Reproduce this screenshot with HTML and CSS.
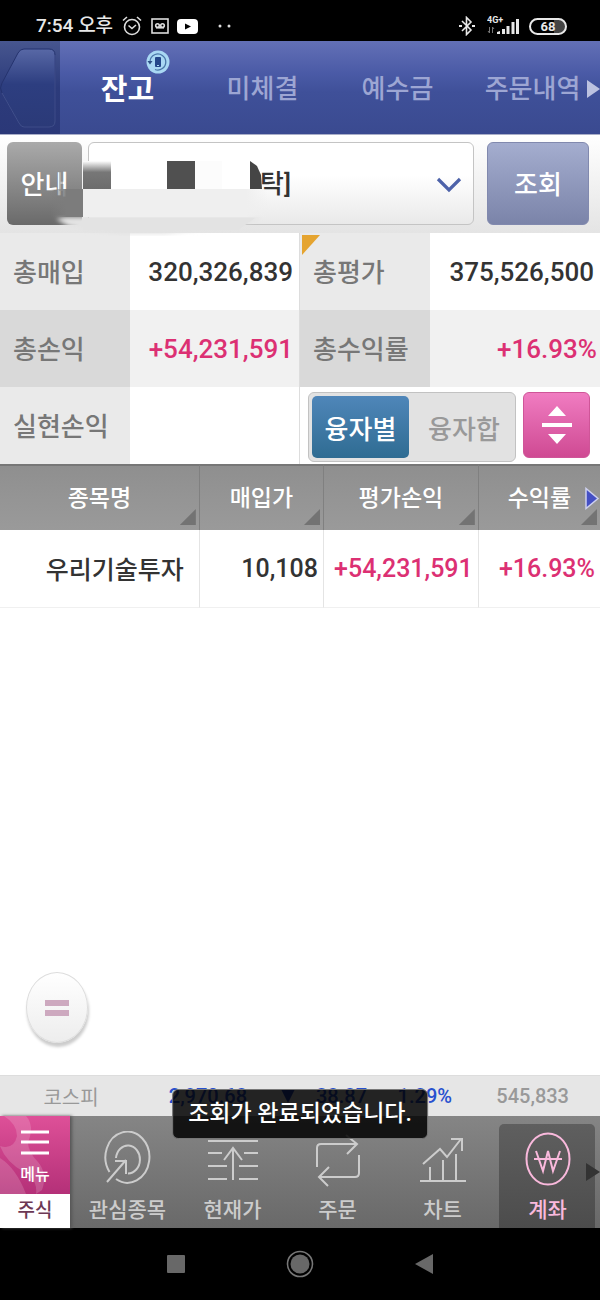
FILE: index.html
```
<!DOCTYPE html>
<html lang="ko">
<head>
    <meta charset="UTF-8">
    <meta name="viewport" content="width=device-width, initial-scale=1.0">
    <title>잔고</title>
    <link rel="stylesheet" href="styles.css">
</head>
<body>
    <div class="status-bar">
        <span class="clock">7:54 오후</span>
        <svg width="22" height="22" viewBox="0 0 22 22" fill="none" stroke="#ddd" stroke-width="1.6">
            <circle cx="11" cy="12" r="7.5"/>
            <path d="M7.5 10.5l3.5 3 4-3.5M2 5.5L6 2M20 5.5L16 2"/>
        </svg>
        <svg class="gap" width="18" height="16" viewBox="0 0 18 16" fill="none" stroke="#ddd" stroke-width="1.6">
            <rect x="1" y="1" width="16" height="14"/>
            <circle cx="6.5" cy="7.5" r="1.8"/>
            <circle cx="11.5" cy="7.5" r="1.8"/>
            <path d="M5 9.8h8"/>
        </svg>
        <svg class="gap" width="21" height="15" viewBox="0 0 21 15">
            <rect width="21" height="15" rx="4" fill="#fff"/>
            <path d="M8 4.5v6l6-3z" fill="#000"/>
        </svg>
        <svg class="dots" width="14" height="4" viewBox="0 0 14 4" fill="#ddd">
            <circle cx="2" cy="2" r="1.5"/>
            <circle cx="11" cy="2" r="1.5"/>
        </svg>
        <svg class="right" width="18" height="20" viewBox="0 0 18 20" fill="none" stroke="#e8e8e8" stroke-width="1.6">
            <path d="M4 5l9 9-4.500 4.500V1.500L13 6l-9 9"/>
            <path d="M1 10h3M14 10h3" stroke-width="2.200"/>
        </svg>
        <svg class="signal" width="34" height="20" viewBox="0 0 34 20">
            <text x="0" y="7" class="network">4G+</text>
            <path d="M2.500 11v6M1 15l1.500 2M5.500 17v-6l1.500 2" stroke="#777" fill="none"/>
            <path d="M10 18v-2l3-1v3zM15 18v-5h3v5zM19.500 18V10h3v8zM24.500 18V6h3v12zM29 18V3h3v15z" fill="#e8e8e8"/>
        </svg>
        <span class="battery">68</span>
    </div>

    <header class="top">
        <button class="back" aria-label="이전">
            <svg width="60" height="93" viewBox="0 0 60 93">
                <defs>
                    <linearGradient id="backFill" x1="0" y1="0" x2="0" y2="1">
                        <stop offset="0" stop-color="#5868a6"/>
                        <stop offset="0.45" stop-color="#2d3e80"/>
                        <stop offset="1" stop-color="#2b3a78"/>
                    </linearGradient>
                </defs>
                <path d="M24 8h25q6 0 6 6v66q0 6-6 6H24q-3 0-5-4L2 52q-3-5 0-10L18 12q2-4 6-4z" fill="url(#backFill)" stroke="#25336e"/>
                <path d="M2 52l17 30q2 4 5 4h25q6 0 6-6V14" fill="none" stroke="#5463a0" opacity=".6"/>
            </svg>
        </button>
        <nav class="tabs">
            <a href="#" class="tab active">잔고
                <svg class="refresh" width="24" height="24" viewBox="0 0 24 24">
                    <circle cx="12" cy="12" r="11.500" fill="#a9d8f3"/>
                    <path d="M9 4.500a8 8 0 1 1 0 15M4 12a8 8 0 0 1 5-7.500" fill="none" stroke="#4a77a8" stroke-width="1.300"/>
                    <path d="M1.500 11h5L4 14.500z" fill="#2c4f85"/>
                    <rect x="9" y="7" width="6" height="10" rx="1" fill="#24478a"/>
                    <path d="M11 15.500h2" stroke="#a9d8f3"/>
                </svg>
            </a>
            <a href="#" class="tab">미체결</a>
            <a href="#" class="tab">예수금</a>
            <a href="#" class="tab">주문내역</a>
        </nav>
        <svg class="tabs-more" width="14" height="18" viewBox="0 0 14 18"><path d="M1 0v18l13-9z" fill="#bcc2e0"/></svg>
    </header>

    <form class="search">
        <button type="button" class="info">안내</button>
        <div class="account">
            <select aria-label="계좌">
                <option>탁]</option>
            </select>
            <svg class="chevron" width="26" height="16" viewBox="0 0 26 16"><path d="M2 2l11 11L24 2" fill="none" stroke="#4d62a9" stroke-width="3.200"/></svg>
        </div>
        <button type="button" class="query">조회</button>
        <!-- hides the account owner -->
        <svg class="mask" width="300" height="104" viewBox="0 0 300 104">
            <defs>
                <linearGradient id="fadeDown" x1="0" y1="0" x2="0" y2="1">
                    <stop offset="0" stop-color="#fff"/>
                    <stop offset="0.4" stop-color="#777"/>
                    <stop offset="1" stop-color="#6c6c6c"/>
                </linearGradient>
                <linearGradient id="fadeRight" x1="0" y1="0" x2="1" y2="0">
                    <stop offset="0.88" stop-color="#efefef"/>
                    <stop offset="1" stop-color="#efefef" stop-opacity="0"/>
                </linearGradient>
                <linearGradient id="fadeLeft" x1="0" y1="0" x2="1" y2="0">
                    <stop offset="0" stop-color="#7c7c7c" stop-opacity="0"/>
                    <stop offset="0.5" stop-color="#7c7c7c"/>
                </linearGradient>
                <filter id="soft"><feGaussianBlur stdDeviation="2"/></filter>
            </defs>
            <path d="M56 85L66 83H262L240 91 165 100H120L84 96 68 92z" fill="#e3e3e3" filter="url(#soft)"/>
            <path d="M83 84H255L238 96H83z" fill="#e3e3e3"/>
            <rect x="83" y="30" width="177" height="26" fill="#fff"/>
            <rect x="50" y="55" width="33" height="28" fill="url(#fadeLeft)"/>
            <rect x="59" y="37" width="4" height="20" fill="#909090" opacity=".6"/>
            <rect x="83" y="55" width="185" height="28" fill="url(#fadeRight)"/>
            <rect x="83" y="27" width="28" height="28" fill="url(#fadeDown)"/>
            <rect x="167" y="27" width="28" height="28" fill="#505050"/>
            <rect x="195" y="27" width="27" height="28" fill="#fcfcfc"/>
            <path d="M250 27l7 5 4 9 1 14h-12z" fill="#454545"/>
        </svg>
    </form>

    <table class="summary">
        <tr>
            <th scope="row">총매입</th>
            <td>320,326,839</td>
            <th scope="row" class="marked">총평가</th>
            <td>375,526,500</td>
        </tr>
        <tr class="shade">
            <th scope="row">총손익</th>
            <td class="up">+54,231,591</td>
            <th scope="row">총수익률</th>
            <td class="up">+16.93%</td>
        </tr>
        <tr>
            <th scope="row">실현손익</th>
            <td></td>
            <td colspan="2" class="tools">
                <div class="tool-row">
                    <div class="switch">
                        <button class="on" aria-pressed="true">융자별</button>
                        <button aria-pressed="false">융자합</button>
                    </div>
                    <button class="fold" aria-label="접기">
                        <svg width="30" height="40" viewBox="0 0 30 40" fill="#fff"><path d="M15 1l9 10H6zM0 18h30v4H0zM6 29h18l-9 10z"/></svg>
                    </button>
                </div>
            </td>
        </tr>
    </table>

    <main>
        <table class="stocks">
            <thead>
                <tr>
                    <th class="name"><button>종목명</button></th>
                    <th class="price"><button>매입가</button></th>
                    <th class="profit"><button>평가손익</button></th>
                    <th class="rate"><button>수익률</button>
                        <svg class="cols-more" width="16" height="24" viewBox="0 0 16 24"><path d="M2 1.500v20L14 11.500z" fill="#444fc4" stroke="#cdd0ee" stroke-width="1.500"/></svg>
                    </th>
                </tr>
            </thead>
            <tbody>
                <tr>
                    <td class="name">우리기술투자</td>
                    <td>10,108</td>
                    <td class="up">+54,231,591</td>
                    <td class="up">+16.93%</td>
                </tr>
            </tbody>
        </table>
        <button class="float" aria-label="빠른메뉴">
            <svg width="24" height="16" viewBox="0 0 24 16" fill="#cda9bf"><path d="M0 0h24v6H0zM0 10h24v6H0z"/></svg>
        </button>
    </main>

    <footer>
        <div class="ticker">
            <span class="index">코스피</span>
            <span>2,970.68</span>
            <span><svg width="14" height="14" viewBox="0 0 14 14"><path d="M0 0h14L7 14z" fill="#2344bd"/></svg></span>
            <span>38.87</span>
            <span>1.29%</span>
            <span class="volume">545,833</span>
        </div>
        <div class="toast" role="status">조회가 완료되었습니다.</div>
        <nav class="menu">
            <div class="menu-main">
                <button class="menu-open">
                    <svg class="swirl" width="70" height="78" viewBox="0 0 70 78">
                        <path d="M4 0h22q9 10 2 26 0 10 10 20 10 12 4 28l-6 4q2-14-12-22Q6 46 0 30q14 4 17-10Q17 8 4 0zM0 42q16 10 26 36H0z" fill="#fff" opacity=".16"/>
                    </svg>
                    <svg width="28" height="26" viewBox="0 0 28 26"><path d="M0 2h28M0 12h28M0 23h28" stroke="#fff" stroke-width="3"/></svg>
                    <span>메뉴</span>
                </button>
                <button class="menu-stock">주식</button>
            </div>
            <a href="#" class="item">
                <svg width="48" height="56" viewBox="0 0 48 56">
                    <path d="M5.500 41A22 25.500 0 1 1 12 48M12 27a12 14 0 1 1 12 15.500M3 51l19-22M11 30h11v13"/>
                </svg>
                <span>관심종목</span>
            </a>
            <a href="#" class="item">
                <svg width="50" height="56" viewBox="0 0 50 56">
                    <path d="M0 10h50M0 22h14M36 22h14M0 35h19M31 35h19M0 48h19M31 48h19M25 49V17M16 29l9-12 9 12"/>
                </svg>
                <span>현재가</span>
            </a>
            <a href="#" class="item">
                <svg width="46" height="56" viewBox="0 0 46 56">
                    <path d="M2 36V17q0-4 4-4h35M31 4l11 9-10 10M44 24v18q0 4-4 4H5M14 36L4 46l9 9"/>
                </svg>
                <span>주문</span>
            </a>
            <a href="#" class="item">
                <svg width="48" height="56" viewBox="0 0 48 56">
                    <path d="M1 50h46M11 50V36M24 50V29M37 50V23M4 33l17-15 7 8L42 8M32 8h11v12"/>
                </svg>
                <span>차트</span>
            </a>
            <a href="#" class="item current">
                <svg width="48" height="56" viewBox="0 0 48 56">
                    <ellipse cx="24" cy="28" rx="21.500" ry="25.500"/>
                    <path d="M12 20l7 20 5-20 5 20 7-20M10 28h28"/>
                </svg>
                <span>계좌</span>
            </a>
            <svg class="menu-more" width="14" height="18" viewBox="0 0 14 18"><path d="M0 0v18l14-9z" fill="#333"/></svg>
        </nav>
        <div class="system">
            <button aria-label="최근 앱"><svg width="18" height="18" viewBox="0 0 18 18"><rect width="18" height="18" rx="1" fill="#686868"/></svg></button>
            <button aria-label="홈"><svg width="28" height="28" viewBox="0 0 28 28"><circle cx="14" cy="14" r="12.500" fill="none" stroke="#777" stroke-width="1.600"/><circle cx="14" cy="14" r="9.500" fill="#686868"/></svg></button>
            <button aria-label="뒤로"><svg width="18" height="20" viewBox="0 0 18 20"><path d="M18 0v20L0 10z" fill="#686868"/></svg></button>
        </div>
    </footer>
</body>
</html>
```
FILE: styles.css
```
* {
    box-sizing: border-box;
}
body {
    font-family: Roboto, "Noto Sans CJK KR", sans-serif;
    font-weight: 500;
    margin: 0;
    min-height: 100vh;
    display: flex;
    flex-direction: column;
    background: #fff;
    color: #333;
}
button, select {
    font: inherit;
    color: inherit;
    border: 0;
    padding: 0;
    margin: 0;
    background: none;
    cursor: pointer;
}
a {
    color: inherit;
    text-decoration: none;
}
svg {
    display: block;
    flex-shrink: 0;
}
table {
    width: 100%;
    table-layout: fixed;
    border-collapse: separate;
    border-spacing: 0;
}
th, td {
    padding: 0;
    font-weight: 500;
}
.up {
    color: #dc3073;
}

/* status bar */
.status-bar {
    display: flex;
    align-items: center;
    height: 41px;
    padding: 11px 33px 0 36px;
    background: #000;
    color: #e8e8e8;
}
.clock {
    font-size: 19px;
    line-height: 20px;
    margin-right: 8px;
}
.gap {
    margin-left: 8px;
}
.dots {
    margin-left: 20px;
}
.right {
    margin-left: auto;
}
.signal {
    margin: 0 8px 0 11px;
}
.network {
    font-size: 9px;
    font-weight: 700;
    fill: #e8e8e8;
}
.battery {
    width: 38px;
    height: 17px;
    border: 2px solid #e8e8e8;
    border-radius: 9px;
    background: linear-gradient(90deg, #000 68%, #444 68%);
    font-size: 13px;
    line-height: 13px;
    font-weight: 700;
    text-align: center;
}

/* top tabs */
.top {
    position: relative;
    display: flex;
    height: 93px;
    background: linear-gradient(#6370b6, #4a5aa6 35%, #3f5099 55%, #3a4a90);
}
.back {
    width: 60px;
    background: linear-gradient(#47568f, #2c3b7b 50%, #2b3878);
}
.tabs {
    flex: 1;
    display: grid;
    grid-template-columns: repeat(4, 1fr);
    align-items: center;
    padding-bottom: 2px;
    text-align: center;
    font-size: 26px;
    color: #9da6d3;
}
.tab {
    position: relative;
    white-space: nowrap;
}
.tab.active {
    color: #fff;
    font-size: 29px;
    font-weight: 700;
}
.refresh {
    position: absolute;
    left: 86px;
    top: -16px;
}
.tabs-more {
    position: absolute;
    right: 0;
    top: 39px;
}

/* account row */
.search {
    position: relative;
    display: flex;
    height: 99px;
    padding: 7px 11px 8px 7px;
    background: linear-gradient(#fff, #e4e4e4);
    border-top: 1px solid #a9aec8;
    font-size: 26px;
}
.info, .query {
    color: #fff;
    border-radius: 6px;
    flex-shrink: 0;
    padding-bottom: 3px;
}
.info {
    width: 75px;
    background: linear-gradient(#aaa, #6a6a6a);
}
.query {
    width: 102px;
    background: linear-gradient(#a4adcf, #7b84a9);
    border: 1px solid #8189ae;
}
.account {
    position: relative;
    flex: 1;
    margin: 0 13px 0 6px;
}
.account select {
    appearance: none;
    width: 100%;
    height: 100%;
    padding-left: 171px;
    border: 1px solid #c4c4c4;
    border-radius: 6px;
    background: linear-gradient(#fff 40%, #e9e9e9);
}
.chevron {
    position: absolute;
    right: 12px;
    top: 35px;
    pointer-events: none;
}
.mask {
    position: absolute;
    left: 0;
    top: -1px;
    pointer-events: none;
}

/* totals */
.summary th, .summary td {
    height: 77px;
    font-size: 26px;
}
.summary th {
    width: 21.7%;
    padding: 0 0 2px 13px;
    text-align: left;
    background: #eaeaea;
    color: #777;
}
.summary td {
    width: 28.3%;
    padding-right: 6px;
    text-align: right;
}
.summary td:nth-child(2) {
    border-right: 1px solid #ddd;
}
.summary .shade th {
    background: #d9d9d9;
}
.summary .shade td {
    background: #f1f1f1;
}
.summary td.up:last-child {
    padding-right: 3px;
}
.marked {
    position: relative;
}
.marked::before {
    content: "";
    position: absolute;
    left: 2px;
    top: 2px;
    width: 18px;
    height: 20px;
    background: #e5a430;
    clip-path: polygon(0 0, 100% 0, 0 100%);
}
.summary td.tools {
    padding: 0 10px 0 8px;
}
.tool-row {
    display: flex;
    align-items: flex-start;
    gap: 7px;
    padding-top: 3px;
}
.switch {
    flex: 1;
    display: flex;
    gap: 7px;
    height: 70px;
    padding: 3px;
    border: 1px solid #c2c2c2;
    border-radius: 6px;
    background: #e2e2e2;
    color: #999;
}
.switch button {
    flex: 1;
    height: 62px;
    border-radius: 5px;
}
.switch .on {
    flex: 0 0 97px;
    background: linear-gradient(#4f86b9, #2f6c92);
    color: #fff;
}
.fold {
    display: flex;
    align-items: center;
    justify-content: center;
    width: 67px;
    height: 66px;
    border: 1px solid #cf5598;
    border-radius: 6px;
    background: linear-gradient(#f07cc1, #cf4a93);
}

/* holdings */
main {
    flex: 1;
    display: flex;
    flex-direction: column;
    align-items: flex-start;
}
.stocks th {
    position: relative;
    height: 66px;
    border-right: 1px solid #808080;
    border-top: 2px solid #777;
    background: linear-gradient(#8f8f8f, #9a9a9a);
    color: #fff;
    font-size: 23px;
}
.stocks th button {
    width: 100%;
    height: 64px;
    padding-bottom: 4px;
}
.stocks th::after {
    content: "";
    position: absolute;
    right: 3px;
    bottom: 5px;
    width: 16px;
    height: 16px;
    background: #737373;
    clip-path: polygon(100% 0, 100% 100%, 0 100%);
}
.stocks .name {
    width: 33.3%;
}
.stocks .price {
    width: 20.7%;
}
.stocks .profit {
    width: 25.8%;
}
.stocks .rate {
    width: 20.2%;
}
.stocks td {
    height: 78px;
    padding-right: 5px;
    border-right: 1px solid #e4e4e4;
    border-bottom: 1px solid #f0f0f0;
    font-size: 25px;
    text-align: right;
}
.stocks td.name {
    padding-right: 15px;
    padding-bottom: 2px;
}
.stocks th:last-child, .stocks td:last-child {
    border-right: 0;
}
.cols-more {
    position: absolute;
    right: 0;
    top: 21px;
}
.float {
    display: flex;
    align-items: center;
    justify-content: center;
    width: 62px;
    height: 71px;
    margin: auto 0 32px 26px;
    border: 1px solid #ddd;
    border-radius: 50%;
    background: linear-gradient(#fff, #ededed);
    box-shadow: 1px 4px 3px #ccc;
}

/* index ticker */
footer {
    position: relative;
}
.ticker {
    display: grid;
    grid-template-columns: 142fr 105fr 48fr 72fr 85fr 117fr 31fr;
    align-items: center;
    height: 41px;
    background: #e6e6e6;
    border-top: 1px solid #ddd;
    font-size: 20px;
    color: #2850cf;
    text-align: right;
}
.ticker svg {
    margin-left: auto;
}
.ticker .index, .ticker .volume {
    color: #999;
}
.ticker .index {
    font-weight: 400;
    text-align: center;
}
.toast {
    position: absolute;
    z-index: 1;
    top: 14px;
    left: 50%;
    transform: translateX(-50%);
    height: 50px;
    padding: 0 15px;
    border: 1px solid #777;
    border-radius: 6px;
    background: rgba(0, 0, 0, 0.85);
    color: #fff;
    font-size: 23px;
    line-height: 48px;
    white-space: nowrap;
}

/* bottom menu */
.menu {
    position: relative;
    display: flex;
    height: 112px;
    background: linear-gradient(#858585, #696969);
}
.menu-main {
    display: flex;
    flex-direction: column;
    width: 70px;
    margin-right: 5px;
    box-shadow: 2px 0 3px #555;
}
.menu-open {
    position: relative;
    display: flex;
    flex-direction: column;
    align-items: center;
    height: 78px;
    padding-top: 14px;
    background: linear-gradient(#de5098, #b43078);
    color: #fff;
    font-size: 16px;
    line-height: 24px;
    gap: 7px;
}
.swirl {
    position: absolute;
    left: 0;
    top: 0;
}
.menu-stock {
    flex: 1;
    background: #fff;
    color: #6c3854;
    font-size: 19px;
    line-height: 28px;
}
.item {
    position: relative;
    flex: 1;
    display: flex;
    flex-direction: column;
    align-items: center;
    gap: 8px;
    margin-top: 8px;
    padding-top: 7px;
    color: #ccc;
    font-size: 21px;
    line-height: 30px;
    white-space: nowrap;
}
.item svg {
    fill: none;
    stroke: currentColor;
    stroke-width: 2;
}
.item.current {
    z-index: 0;
    color: #f9b9dc;
}
.item.current::before {
    content: "";
    position: absolute;
    z-index: -1;
    inset: 0 5px 0 4px;
    border-radius: 5px 5px 0 0;
    background: linear-gradient(#5f5f5f, #4c4c4c);
}
.menu-more {
    position: absolute;
    right: 0;
    top: 47px;
}

/* android navigation */
.system {
    display: flex;
    height: 72px;
    padding: 0 19%;
    background: #000;
}
.system button {
    flex: 1;
    display: flex;
    align-items: center;
    justify-content: center;
}
```
